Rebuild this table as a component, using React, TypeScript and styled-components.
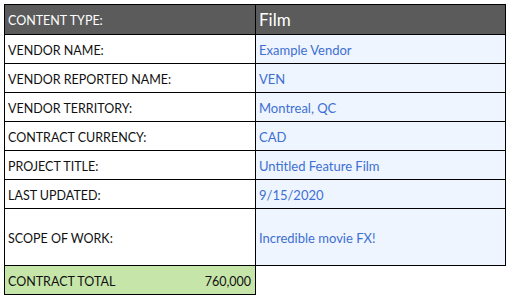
import styled, { createGlobalStyle } from "styled-components";

const GlobalStyle = createGlobalStyle`
  body {
    margin: 0;
    background: #ffffff;
    font-family: "Lato", "Noto Sans", sans-serif;
  }
`;

interface Row {
  label: string;
  value: string;
  tall?: boolean;
}

const rows: Row[] = [
  { label: "VENDOR NAME:", value: "Example Vendor" },
  { label: "VENDOR REPORTED NAME:", value: "VEN" },
  { label: "VENDOR TERRITORY:", value: "Montreal, QC" },
  { label: "CONTRACT CURRENCY:", value: "CAD" },
  { label: "PROJECT TITLE:", value: "Untitled Feature Film" },
  { label: "LAST UPDATED:", value: "9/15/2020" },
  { label: "SCOPE OF WORK:", value: "Incredible movie FX!", tall: true },
];

export default function App(): JSX.Element {
  return (
    <StyledPage>
      <GlobalStyle />
      <StyledTable>
        <colgroup>
          <col style={{ width: 251 }} />
          <col style={{ width: 250 }} />
        </colgroup>
        <tbody>
          <tr>
            <StyledHeadLabel>CONTENT TYPE:</StyledHeadLabel>
            <StyledHeadValue>Film</StyledHeadValue>
          </tr>
          {rows.map((row) => (
            <tr key={row.label}>
              <StyledLabel $tall={row.tall}>{row.label}</StyledLabel>
              <StyledValue $tall={row.tall}>{row.value}</StyledValue>
            </tr>
          ))}
          <tr>
            <StyledTotal>
              <StyledTotalInner>
                <span>CONTRACT TOTAL</span>
                <span>760,000</span>
              </StyledTotalInner>
            </StyledTotal>
            <StyledEmpty />
          </tr>
        </tbody>
      </StyledTable>
    </StyledPage>
  );
}

const StyledPage = styled.div`
  padding: 4px;
`;

const StyledTable = styled.table`
  border-collapse: collapse;
  table-layout: fixed;
  width: 501px;
`;

const StyledCell = styled.td<{ $tall?: boolean }>`
  border: 1px solid #000000;
  height: ${(p) => (p.$tall ? 57 : 29)}px;
  padding: 2px 3px 0 3px;
  box-sizing: border-box;
  vertical-align: middle;
  white-space: nowrap;
  overflow: hidden;
`;

const StyledHeadLabel = styled(StyledCell)`
  background: #5b5b5b;
  color: #ffffff;
  font-size: 12.5px;
  height: 30px;
`;

const StyledHeadValue = styled(StyledCell)`
  background: #5b5b5b;
  color: #ffffff;
  font-size: 17px;
  height: 30px;
  padding-top: 0;
`;

const StyledLabel = styled(StyledCell)`
  color: #111111;
  font-size: 12.5px;
`;

const StyledValue = styled(StyledCell)`
  background: #eef5fe;
  color: #3e6fd3;
  font-size: 13px;
`;

const StyledTotal = styled(StyledCell)`
  background: #c6e5a9;
  color: #111111;
  font-size: 12.5px;
`;

const StyledTotalInner = styled.div`
  display: flex;
  justify-content: space-between;
  padding-right: 1px;
`;

const StyledEmpty = styled.td`
  border: none;
`;
